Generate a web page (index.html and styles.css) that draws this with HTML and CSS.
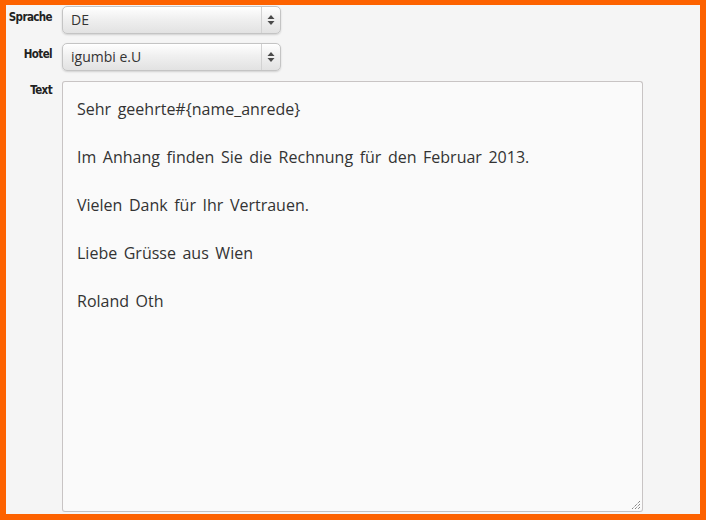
FILE: index.html
```html
<!DOCTYPE html>
<html>
<head>
<meta charset="utf-8">
<link rel="stylesheet" href="styles.css">
</head>
<body>
<div class="frame">
  <div class="row row-select">
    <label class="label">Sprache</label>
    <div class="select">
      <span class="value">DE</span>
      <span class="arrows"><svg width="8" height="12" viewBox="0 0 8 12"><path d="M4 1 L7.5 5 L0.5 5 Z M0.5 7 L7.5 7 L4 11 Z" fill="#4a4a4a"/></svg></span>
    </div>
  </div>
  <div class="row row-select">
    <label class="label">Hotel</label>
    <div class="select">
      <span class="value">igumbi e.U</span>
      <span class="arrows"><svg width="8" height="12" viewBox="0 0 8 12"><path d="M4 1 L7.5 5 L0.5 5 Z M0.5 7 L7.5 7 L4 11 Z" fill="#4a4a4a"/></svg></span>
    </div>
  </div>
  <div class="row row-text">
    <label class="label">Text</label>
    <div class="textarea">
      <p>Sehr geehrte#{name_anrede}</p>
      <p>Im Anhang finden Sie die Rechnung für den Februar 2013.</p>
      <p>Vielen Dank für Ihr Vertrauen.</p>
      <p>Liebe Grüsse aus Wien</p>
      <p>Roland Oth</p>
      <svg class="grip" width="10" height="10" viewBox="0 0 10 10"><path d="M9 1 L1 9 M9 4 L4 9 M9 7 L7 9" stroke="#555" stroke-width="1" stroke-dasharray="1 1"/></svg>
    </div>
  </div>
</div>
</body>
</html>
```
FILE: styles.css
```css
html, body {
  margin: 0;
  padding: 0;
}
body {
  width: 706px;
  height: 520px;
  overflow: hidden;
}
.frame {
  box-sizing: border-box;
  width: 706px;
  height: 520px;
  border-style: solid;
  border-color: #fd6200;
  border-width: 5px 6px 6px 6px;
  background: #f5f5f5;
  padding-top: 1px;
  display: flex;
  flex-direction: column;
}
.row {
  display: flex;
  align-items: flex-start;
}
.row-select {
  margin-bottom: 9px;
}
.row-select + .row-select {
  margin-bottom: 10px;
}
.label {
  width: 46px;
  padding-right: 10px;
  text-align: right;
  font-family: "DejaVu Sans Condensed", "DejaVu Sans", sans-serif;
  font-stretch: condensed;
  font-weight: bold;
  font-size: 11.5px;
  letter-spacing: -0.6px;
  color: #222;
  line-height: 14px;
  padding-top: 4px;
}
.row-text .label {
  padding-top: 2px;
}
.select {
  box-sizing: border-box;
  width: 219px;
  height: 28px;
  border: 1px solid #c4c4c4;
  border-radius: 5px;
  background: linear-gradient(#ffffff, #f0f0f0 45%, #e2e2e2);
  box-shadow: 0 1px 2px rgba(0,0,0,0.15), inset 0 1px 0 #fff;
  display: flex;
  align-items: stretch;
}
.value {
  flex: 1;
  padding-left: 8px;
  font-family: "Open Sans", sans-serif;
  font-size: 14px;
  color: #333;
  line-height: 26px;
}
.arrows {
  width: 18px;
  border-left: 1px solid #d2d2d2;
  display: flex;
  align-items: center;
  justify-content: center;
}
.textarea {
  box-sizing: border-box;
  position: relative;
  width: 581px;
  height: 431px;
  border: 1px solid #c8c4c4;
  border-bottom-color: #c2c2c2;
  border-radius: 3px;
  background: #fafafa;
  padding: 15px 14px;
  font-family: "Open Sans", sans-serif;
  font-size: 16px;
  word-spacing: 2.4px;
  color: #333;
  line-height: 24px;
}
.textarea p {
  margin: 0 0 24px 0;
}
.grip {
  position: absolute;
  right: 1px;
  bottom: 1px;
}
```
